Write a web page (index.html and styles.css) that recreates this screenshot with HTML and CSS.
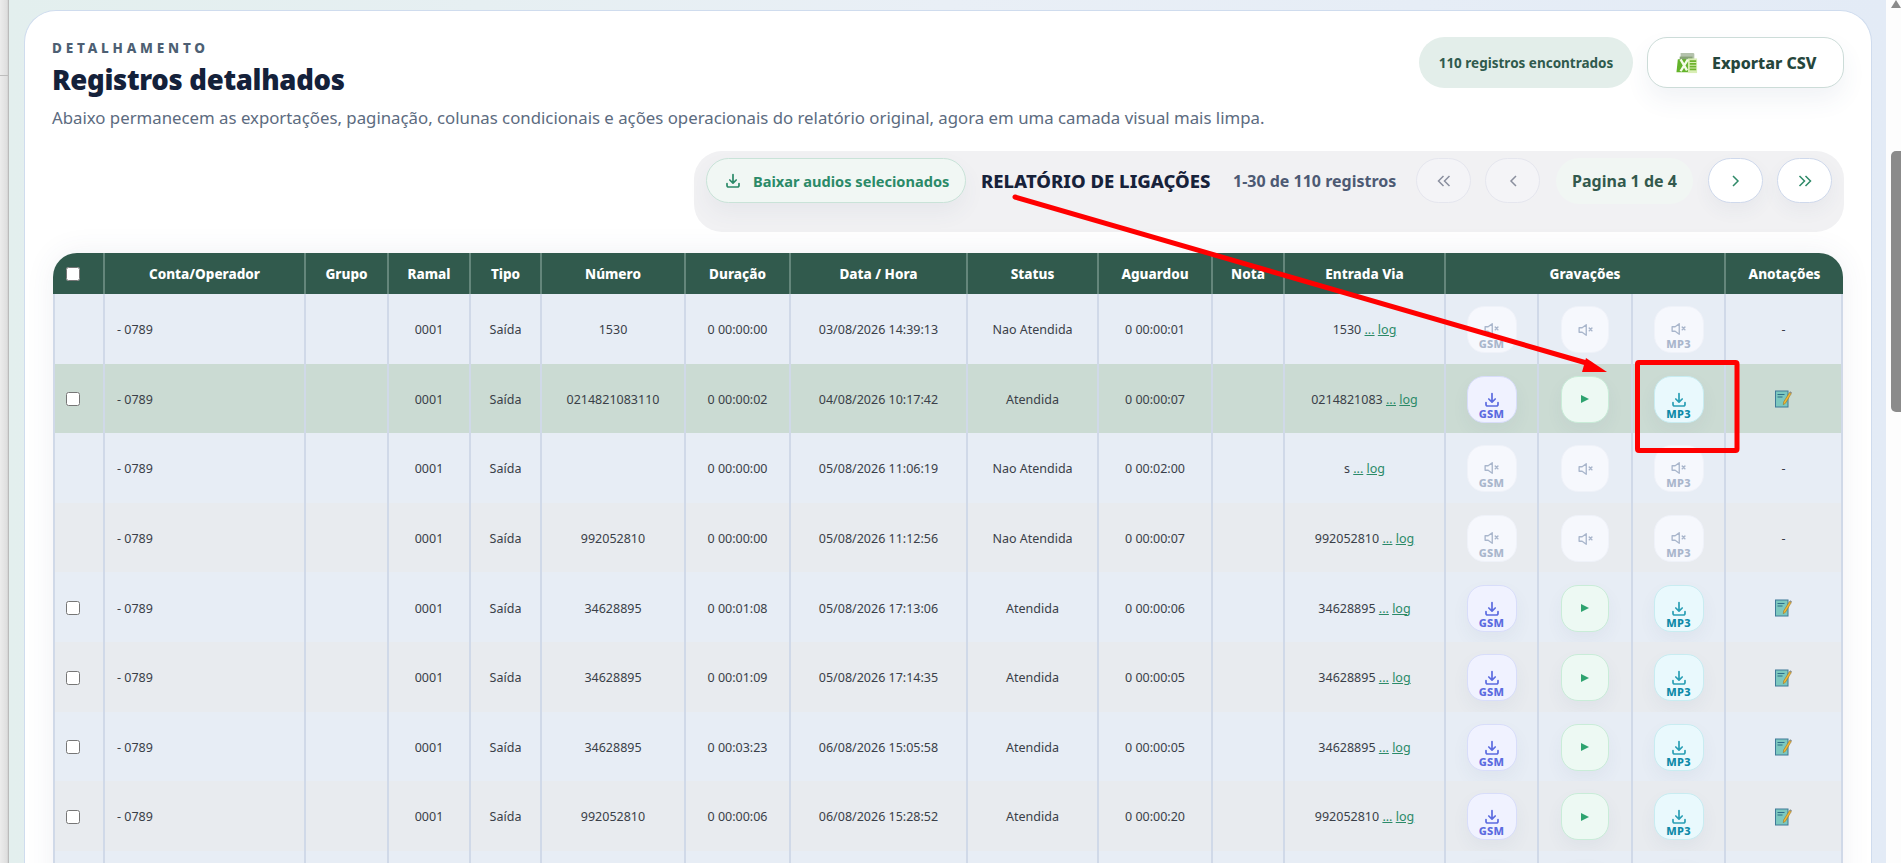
FILE: index.html
```html
<!DOCTYPE html>
<html lang="pt-BR">
<head>
<meta charset="utf-8">
<title>Registros detalhados</title>
<link rel="stylesheet" href="styles.css">
</head>
<body>
<svg class="defs" width="0" height="0" aria-hidden="true">
  <symbol id="dl" viewBox="0 0 16 16"><path d="M8 1.500v8.500M4.800 7l3.200 3.200L11.200 7M2 10.500v2a1.500 1.500 0 0 0 1.500 1.500h9a1.500 1.500 0 0 0 1.500-1.500v-2" fill="none" stroke="currentColor" stroke-width="1.700" stroke-linecap="round" stroke-linejoin="round"/></symbol>
  <symbol id="mute" viewBox="0 0 20 16"><path d="M1.500 5h4l5.500-4v14l-5.500-4h-4z" fill="none" stroke="currentColor" stroke-width="1.800" stroke-linejoin="round"/><path d="M15 5.500l3.500 3.500M18.500 5.500L15 9" fill="none" stroke="currentColor" stroke-width="1.900" stroke-linecap="round"/></symbol>
  <symbol id="note" viewBox="0 0 17 18"><rect x="0.500" y="1" width="12.500" height="16" fill="#7cc8bf" stroke="#3f7a98"/><path d="M2.500 4.500h7M2.500 7h5" stroke="#2f6f88"/><path d="M14.500 2.500l1.800 1.100-5.800 9.600-2.200 1.500.3-2.700z" fill="#f2b632" stroke="#8a6a20" stroke-width="0.500"/><path d="M14.500 2.500l.7-1.200 1.800 1.100-.7 1.200z" fill="#8d8d86"/></symbol>
</svg>
<div class="app">
  <div class="strip"><div class="strip-top"></div></div>
  <main class="main">
    <section class="card">
      <header class="head">
        <div class="head-text">
          <div class="eyebrow">DETALHAMENTO</div>
          <h1 class="title">Registros detalhados</h1>
          <p class="sub">Abaixo permanecem as exportações, paginação, colunas condicionais e ações operacionais do relatório original, agora em uma camada visual mais limpa.</p>
        </div>
        <div class="head-actions">
          <span class="count">110 registros encontrados</span>
          <button class="export" type="button">
            <svg class="xl" width="22" height="22" viewBox="0 0 24 24" aria-hidden="true">
              <path d="M5 1h14l1 1v6H5z" fill="#b4c2ac"/>
              <path d="M4 5h14v6H4z" fill="#86a276"/>
              <path d="M2 8h14v14H0.500z" fill="#63b32a"/>
              <path d="M13 7h10v16H13z" fill="#d9eeb5"/>
              <path d="M15 10h7M15 13h7M15 16h7M15 19h7" stroke="#6fb32d" stroke-width="1.800"/>
              <path d="M5 8l7 12M13 8L5 21" stroke="#f4fbe8" stroke-width="2.600"/>
            </svg>
            <span>Exportar CSV</span>
          </button>
        </div>
      </header>

      <div class="toolbar">
        <button class="dl-all" type="button"><svg class="i16" aria-hidden="true"><use href="#dl"/></svg><span>Baixar audios selecionados</span></button>
        <strong class="report">RELATÓRIO DE LIGAÇÕES</strong>
        <span class="range">1-30 de 110 registros</span>
        <button class="nav off" type="button" aria-label="Primeira"><svg width="14" height="14" viewBox="0 0 14 14"><path d="M6.500 2L1.500 7l5 5M12.500 2l-5 5 5 5" fill="none" stroke="currentColor" stroke-width="1.500"/></svg></button>
        <button class="nav off" type="button" aria-label="Anterior"><svg width="14" height="14" viewBox="0 0 14 14"><path d="M10 2L5 7l5 5" fill="none" stroke="currentColor" stroke-width="1.500"/></svg></button>
        <span class="page">Pagina 1 de 4</span>
        <button class="nav" type="button" aria-label="Próxima"><svg width="14" height="14" viewBox="0 0 14 14"><path d="M4 2l5 5-5 5" fill="none" stroke="currentColor" stroke-width="1.500"/></svg></button>
        <button class="nav" type="button" aria-label="Última"><svg width="14" height="14" viewBox="0 0 14 14"><path d="M1.500 2l5 5-5 5M7.500 2l5 5-5 5" fill="none" stroke="currentColor" stroke-width="1.500"/></svg></button>
      </div>

      <div class="table-wrap">
        <table class="grid">
          <colgroup>
            <col class="c1"><col class="c2"><col class="c3"><col class="c4"><col class="c5"><col class="c6"><col class="c7"><col class="c8"><col class="c9"><col class="c10"><col class="c11"><col class="c12"><col class="c13"><col class="c14"><col class="c15"><col class="c16">
          </colgroup>
          <thead>
            <tr><th><input class="chk" type="checkbox"></th><th>Conta/Operador</th><th>Grupo</th><th>Ramal</th><th>Tipo</th><th>Número</th><th>Duração</th><th>Data / Hora</th><th>Status</th><th>Aguardou</th><th>Nota</th><th>Entrada Via</th><th colspan="3">Gravações</th><th>Anotações</th></tr>
          </thead>
          <tbody>
            <tr>
              <td></td><td class="left">- 0789</td><td></td><td>0001</td><td>Saída</td><td>1530</td><td>0 00:00:00</td><td>03/08/2026 14:39:13</td><td>Nao Atendida</td><td>0 00:00:01</td><td></td><td>1530 <a class="log" href="#">...</a> <a class="log" href="#">log</a></td>
              <td><span class="rec none"><svg class="spk" aria-hidden="true"><use href="#mute"/></svg><b>GSM</b></span></td>
              <td><span class="rec none solo"><svg class="spk" aria-hidden="true"><use href="#mute"/></svg></span></td>
              <td><span class="rec none"><svg class="spk" aria-hidden="true"><use href="#mute"/></svg><b>MP3</b></span></td>
              <td>-</td>
            </tr>
            <tr class="hl">
              <td><input class="chk" type="checkbox"></td><td class="left">- 0789</td><td></td><td>0001</td><td>Saída</td><td>0214821083110</td><td>0 00:00:02</td><td>04/08/2026 10:17:42</td><td>Atendida</td><td>0 00:00:07</td><td></td><td>0214821083 <a class="log" href="#">...</a> <a class="log" href="#">log</a></td>
              <td><span class="rec gsm"><svg class="dl" aria-hidden="true"><use href="#dl"/></svg><b>GSM</b></span></td>
              <td><span class="rec play"><i class="tri"></i></span></td>
              <td><span class="rec mp3"><svg class="dl" aria-hidden="true"><use href="#dl"/></svg><b>MP3</b></span></td>
              <td><svg class="note" aria-hidden="true"><use href="#note"/></svg></td>
            </tr>
            <tr>
              <td></td><td class="left">- 0789</td><td></td><td>0001</td><td>Saída</td><td></td><td>0 00:00:00</td><td>05/08/2026 11:06:19</td><td>Nao Atendida</td><td>0 00:02:00</td><td></td><td>s <a class="log" href="#">...</a> <a class="log" href="#">log</a></td>
              <td><span class="rec none"><svg class="spk" aria-hidden="true"><use href="#mute"/></svg><b>GSM</b></span></td>
              <td><span class="rec none solo"><svg class="spk" aria-hidden="true"><use href="#mute"/></svg></span></td>
              <td><span class="rec none"><svg class="spk" aria-hidden="true"><use href="#mute"/></svg><b>MP3</b></span></td>
              <td>-</td>
            </tr>
            <tr class="alt">
              <td></td><td class="left">- 0789</td><td></td><td>0001</td><td>Saída</td><td>992052810</td><td>0 00:00:00</td><td>05/08/2026 11:12:56</td><td>Nao Atendida</td><td>0 00:00:07</td><td></td><td>992052810 <a class="log" href="#">...</a> <a class="log" href="#">log</a></td>
              <td><span class="rec none"><svg class="spk" aria-hidden="true"><use href="#mute"/></svg><b>GSM</b></span></td>
              <td><span class="rec none solo"><svg class="spk" aria-hidden="true"><use href="#mute"/></svg></span></td>
              <td><span class="rec none"><svg class="spk" aria-hidden="true"><use href="#mute"/></svg><b>MP3</b></span></td>
              <td>-</td>
            </tr>
            <tr>
              <td><input class="chk" type="checkbox"></td><td class="left">- 0789</td><td></td><td>0001</td><td>Saída</td><td>34628895</td><td>0 00:01:08</td><td>05/08/2026 17:13:06</td><td>Atendida</td><td>0 00:00:06</td><td></td><td>34628895 <a class="log" href="#">...</a> <a class="log" href="#">log</a></td>
              <td><span class="rec gsm"><svg class="dl" aria-hidden="true"><use href="#dl"/></svg><b>GSM</b></span></td>
              <td><span class="rec play"><i class="tri"></i></span></td>
              <td><span class="rec mp3"><svg class="dl" aria-hidden="true"><use href="#dl"/></svg><b>MP3</b></span></td>
              <td><svg class="note" aria-hidden="true"><use href="#note"/></svg></td>
            </tr>
            <tr class="alt">
              <td><input class="chk" type="checkbox"></td><td class="left">- 0789</td><td></td><td>0001</td><td>Saída</td><td>34628895</td><td>0 00:01:09</td><td>05/08/2026 17:14:35</td><td>Atendida</td><td>0 00:00:05</td><td></td><td>34628895 <a class="log" href="#">...</a> <a class="log" href="#">log</a></td>
              <td><span class="rec gsm"><svg class="dl" aria-hidden="true"><use href="#dl"/></svg><b>GSM</b></span></td>
              <td><span class="rec play"><i class="tri"></i></span></td>
              <td><span class="rec mp3"><svg class="dl" aria-hidden="true"><use href="#dl"/></svg><b>MP3</b></span></td>
              <td><svg class="note" aria-hidden="true"><use href="#note"/></svg></td>
            </tr>
            <tr>
              <td><input class="chk" type="checkbox"></td><td class="left">- 0789</td><td></td><td>0001</td><td>Saída</td><td>34628895</td><td>0 00:03:23</td><td>06/08/2026 15:05:58</td><td>Atendida</td><td>0 00:00:05</td><td></td><td>34628895 <a class="log" href="#">...</a> <a class="log" href="#">log</a></td>
              <td><span class="rec gsm"><svg class="dl" aria-hidden="true"><use href="#dl"/></svg><b>GSM</b></span></td>
              <td><span class="rec play"><i class="tri"></i></span></td>
              <td><span class="rec mp3"><svg class="dl" aria-hidden="true"><use href="#dl"/></svg><b>MP3</b></span></td>
              <td><svg class="note" aria-hidden="true"><use href="#note"/></svg></td>
            </tr>
            <tr class="alt">
              <td><input class="chk" type="checkbox"></td><td class="left">- 0789</td><td></td><td>0001</td><td>Saída</td><td>992052810</td><td>0 00:00:06</td><td>06/08/2026 15:28:52</td><td>Atendida</td><td>0 00:00:20</td><td></td><td>992052810 <a class="log" href="#">...</a> <a class="log" href="#">log</a></td>
              <td><span class="rec gsm"><svg class="dl" aria-hidden="true"><use href="#dl"/></svg><b>GSM</b></span></td>
              <td><span class="rec play"><i class="tri"></i></span></td>
              <td><span class="rec mp3"><svg class="dl" aria-hidden="true"><use href="#dl"/></svg><b>MP3</b></span></td>
              <td><svg class="note" aria-hidden="true"><use href="#note"/></svg></td>
            </tr>
            <tr>
              <td><input class="chk" type="checkbox"></td><td class="left"></td><td></td><td></td><td></td><td></td><td></td><td></td><td></td><td></td><td></td><td></td>
              <td><span class="rec gsm"></span></td>
              <td><span class="rec play"></span></td>
              <td><span class="rec mp3"></span></td>
              <td></td>
            </tr>
          </tbody>
        </table>
      </div>
    </section>
  </main>
  <div class="scrollbar"><i class="sb-up"></i><div class="sb-thumb"></div></div>
</div>
<svg class="markup" width="1901" height="863" viewBox="0 0 1901 863" aria-hidden="true">
  <line x1="1015" y1="197" x2="1590" y2="364" stroke="#ff0000" stroke-width="5" stroke-linecap="round"/>
  <polygon points="1586,358 1582,372 1607,372" fill="#ff0000"/>
  <rect x="1637.500" y="362.500" width="99.500" height="88" rx="1.500" fill="none" stroke="#ff0000" stroke-width="5"/>
</svg>
</body>
</html>
```

FILE: styles.css
```css
* { box-sizing: border-box; }
html, body { margin: 0; height: 100%; overflow: hidden; }
body { font-family: "Noto Sans", "Open Sans", sans-serif; color: #333; background: #fff; }
.defs { position: absolute; }
.app { display: flex; width: 1901px; height: 863px; overflow: hidden; }
.strip { width: 9px; flex: none; background: linear-gradient(90deg, #ececec 0%, #dedede 80%, #aeaeae 100%); }
.strip-top { height: 76px; border-bottom: 1px solid #bdbdbd; }
.main { flex: 1; min-width: 0; padding: 10px 14px 0 15px; background: linear-gradient(90deg, #e3efee 0%, #e9eff6 50%, #e3ebf6 100%); }
.card { height: 900px; padding: 0 28px; background: #fff; border: 1px solid #cfdcee; border-bottom: 0; border-radius: 32px 32px 0 0; }

.head { display: flex; justify-content: space-between; align-items: flex-start; height: 140px; padding-top: 26px; }
.head-text { margin-left: -1px; }
.eyebrow { font-size: 13.500px; line-height: 18px; font-weight: 800; letter-spacing: 3.800px; color: #4d5f73; margin-top: 2px; }
.title { margin: 3px 0 0; font-size: 27.500px; line-height: 40px; font-weight: 900; color: #14213a; letter-spacing: -0.300px; }
.sub { margin: 6px 0 0; font-size: 16.800px; line-height: 24px; color: #5c6b80; white-space: nowrap; }
.head-actions { display: flex; gap: 14px; margin-right: -1px; }
.count { display: flex; align-items: center; justify-content: center; width: 214px; height: 51px; border-radius: 26px; background: #e3eeea; color: #2f5a4d; font-size: 13.500px; font-weight: 700; }
.export { display: flex; align-items: center; gap: 14px; height: 51px; width: 197px; padding: 0 0 0 28px; border: 1px solid #ccdcd8; border-radius: 20px; background: #fff; color: #25463c; font: 800 16px "Noto Sans", sans-serif; box-shadow: 0 12px 24px rgba(60, 90, 130, .07); }

.toolbar { display: flex; align-items: flex-start; width: 1150px; height: 81px; margin: 0 -1px 0 auto; padding: 7px 12px 0; background: #f1f1f3; border-radius: 28px; }
.dl-all { display: flex; align-items: center; gap: 12px; flex: none; width: 260px; height: 45px; padding: 0 0 0 18px; border: 1px solid #c9e3d8; border-radius: 23px; background: #f1f7f4; color: #2b8a68; font: 700 14.600px "Noto Sans", sans-serif; box-shadow: 0 10px 22px rgba(60, 80, 120, .06); white-space: nowrap; }
.i16 { width: 16px; height: 16px; }
.report { flex: none; width: 252px; margin-left: 15px; font-size: 18.500px; line-height: 45px; font-weight: 800; color: #17223a; white-space: nowrap; }
.range { flex: none; width: 183px; font-size: 16px; line-height: 46px; font-weight: 700; color: #4d5a73; white-space: nowrap; }
.nav { display: flex; align-items: center; justify-content: center; flex: none; width: 55px; height: 45px; margin-right: 14px; padding: 0; border: 1px solid #cfd9ec; border-radius: 23px; background: #fff; color: #2f8a68; box-shadow: 0 8px 18px rgba(60, 80, 120, .05); }
.nav:last-child { margin-right: 0; }
.nav.off { background: #f4f4f7; border-color: #e5e6ee; color: #8a8f9e; box-shadow: none; }
.page { flex: none; width: 137px; height: 46px; margin: 0 15px 0 2px; border-radius: 23px; background: #f1f6f3; color: #33594d; font-size: 16px; font-weight: 700; line-height: 46px; text-align: center; }

.table-wrap { margin-top: 21px; border-radius: 24px 24px 0 0; overflow: hidden; box-shadow: 0 0 30px rgba(60, 80, 120, .08); }
.grid { width: 1790px; border-collapse: separate; border-spacing: 0; table-layout: fixed; }
.c1 { width: 52px; } .c2 { width: 201px; } .c3 { width: 83px; } .c4 { width: 82px; }
.c5 { width: 71px; } .c6 { width: 144px; } .c7 { width: 105px; } .c8 { width: 177px; }
.c9 { width: 131px; } .c10 { width: 114px; } .c11 { width: 72px; } .c12 { width: 161px; }
.c13 { width: 93px; } .c14 { width: 94px; } .c15 { width: 93px; } .c16 { width: 117px; }
.grid th { height: 41px; padding: 0; background: #315a4d; color: #fff; font-size: 13.500px; font-weight: 800; text-align: center; border-right: 2px solid #64867b; }
.grid th:last-child { border-right: 0; }
.grid td { height: 69.600px; padding: 2px 0 0; background: #e7edf5; font-size: 12.500px; text-align: center; border-right: 2px solid #d0d9e8; color: #3a3f48; }
.grid td:first-child { border-left: 2px solid #d0d9e8; }
.grid tr.alt td { background: #e8ebef; }
.grid tr.hl td { background: #cbdbd3; }
.grid td.left { text-align: left; padding-left: 12px; }
.chk { display: block; width: 14px; height: 14px; margin: 0 0 0 13px; }
.grid td .chk { margin-left: 11px; }
.log { color: #2b8a68; text-decoration: underline; }

.rec { display: flex; flex-direction: column; align-items: center; justify-content: flex-end; width: 50px; height: 47px; margin: 0 auto; padding-bottom: 2px; border: 1px solid; border-radius: 17px; }
.rec b { font-size: 11px; line-height: 12px; font-weight: 800; letter-spacing: .3px; }
.rec .dl { width: 16px; height: 16px; }
.mp3 .dl { color: #2a9fb5; }
.rec .spk { width: 15px; height: 12px; margin-bottom: 3px; }
.none { background: #f6f8fd; border-color: #eff2f9; color: #a9b6cc; }
.gsm { background: #f0f2ff; border-color: #d8ddfa; color: #5b6be0; box-shadow: 0 8px 18px rgba(60, 80, 120, .05); }
.mp3 { background: #e9f9fd; border-color: #c8ecf1; color: #0f8aa8; box-shadow: 0 8px 18px rgba(60, 80, 120, .05); }
.play { justify-content: center; padding: 0; background: #edf9f3; border-color: #c9ecd8; width: 48px; box-shadow: 0 8px 18px rgba(60, 80, 120, .05); }
.solo { justify-content: center; padding: 0; width: 48px; }
.solo .spk { margin: 0; }
.tri { width: 0; height: 0; border-left: 8px solid #2ea36f; border-top: 4.500px solid transparent; border-bottom: 4.500px solid transparent; }
.note { display: block; width: 17px; height: 18px; margin: 0 auto; }

.scrollbar { position: relative; width: 15px; flex: none; background: #fdfdfd; }
.sb-up { position: absolute; top: 0; left: 5px; border-left: 5px solid transparent; border-right: 5px solid transparent; border-bottom: 8px solid #8b8b8b; }
.sb-thumb { position: absolute; left: 5px; right: 0; top: 151px; height: 261px; background: #8b8b8b; border-radius: 5px 0 0 5px; }
.markup { position: absolute; left: 0; top: 0; pointer-events: none; }
```
